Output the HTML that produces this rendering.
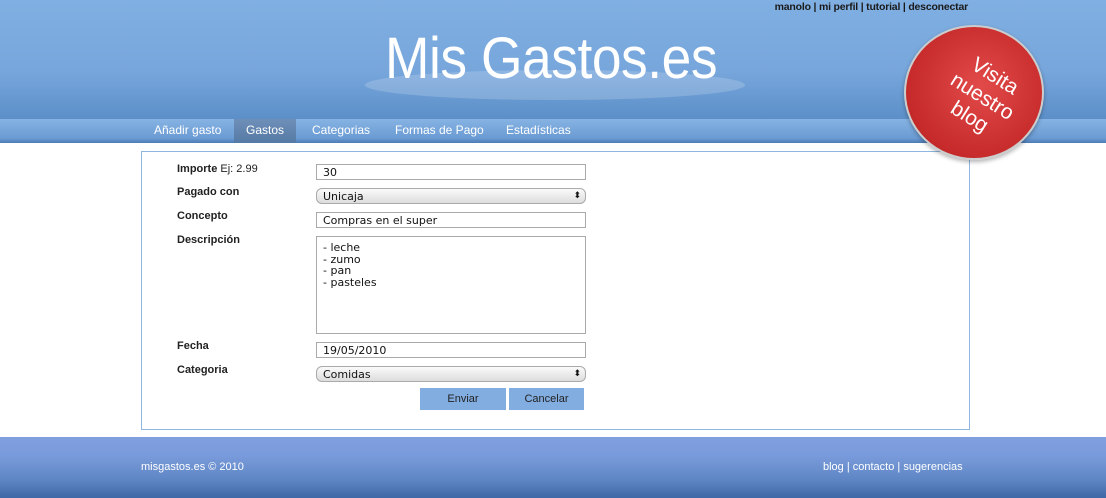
<!DOCTYPE html>
<html><head><meta charset="utf-8"><style>
*{margin:0;padding:0;box-sizing:border-box}
body{width:1106px;height:498px;overflow:hidden;background:#fff;font-family:"Liberation Sans",sans-serif;position:relative}
#hdr{position:absolute;left:0;top:0;width:1106px;height:119px;background:linear-gradient(#80afe2,#77a6dc 60%,#5c8fc8)}
#top{position:absolute;right:138px;top:1px;font-size:10.5px;font-weight:bold;color:#1a1a1a;letter-spacing:-0.2px}
#logo{position:absolute;left:385px;top:26px;font-size:58px;color:#fff;font-family:"Liberation Sans",sans-serif;letter-spacing:-0.5px;font-weight:normal;transform:scaleX(0.92);transform-origin:left;line-height:66px}
#ell{position:absolute;left:365px;top:70px;width:380px;height:30px;border-radius:50%;background:rgba(255,255,255,0.18)}
#nav{position:absolute;left:0;top:119px;width:1106px;height:24px;background:linear-gradient(#86b3e3,#6b9bd3 80%,#4d7cb5)}
#nav span{position:absolute;top:0;height:24px;line-height:22px;color:#fff;font-size:12px}
#nav .act{background:linear-gradient(#6e8fb8,#557aa5)}
#blog{position:absolute;left:904px;top:25px;width:140px;height:135px;border-radius:50%;background:radial-gradient(circle at 55% 45%,#e24a4a,#c62a2a 70%,#a11c1c);border:2px solid #ccc;box-shadow:0 2px 4px rgba(0,0,0,.3);z-index:2}
#blog div{position:absolute;color:#fff;font-size:21px;font-family:"Liberation Sans",sans-serif;transform:rotate(32deg);text-align:center;left:26px;top:34px;line-height:24px;width:100px}
#box{position:absolute;left:141px;top:151px;width:829px;height:279px;border:1px solid #8fb6e2}
.l{position:absolute;left:177px;font-size:11px;font-weight:bold;color:#222}
.i{position:absolute;left:316px;width:270px;height:16px;border:1px solid #aaa;font-size:11px;padding-left:6px;line-height:15px;color:#111;font-family:"DejaVu Sans",sans-serif}
.s{border-radius:6px;background:linear-gradient(#fafafa,#ddd);border-color:#aaa}
.s:after{content:"⬍";position:absolute;right:4px;top:0;font-size:9px}
.b{position:absolute;top:388px;height:22px;background:#82ade0;color:#222;font-size:11px;text-align:center;line-height:22px}
#ft{position:absolute;left:0;top:437px;width:1106px;height:61px;background:linear-gradient(#7f9fdf,#7a9bdb 30%,#5f86c4 70%,#3e67a6)}
#ft span{position:absolute;top:24px;color:#fff;font-size:11px}
</style></head><body>
<div id="hdr"><div id="top">manolo | mi perfil | tutorial | desconectar</div><div id="ell"></div><div id="logo">Mis Gastos.es</div></div>
<div id="nav">
<span style="left:154px">Añadir gasto</span>
<span class="act" style="left:234px;width:62px;text-align:center">Gastos</span>
<span style="left:312px">Categorias</span>
<span style="left:395px">Formas de Pago</span>
<span style="left:506px">Estadísticas</span>
</div>
<div id="box"></div>
<div id="blog"><div>Visita<br>nuestro<br>blog</div></div>
<div class="l" style="top:163px">Importe <span style="font-weight:normal">Ej: 2.99</span></div>
<div class="l" style="top:186px">Pagado con</div>
<div class="l" style="top:210px">Concepto</div>
<div class="l" style="top:234px">Descripción</div>
<div class="l" style="top:340px">Fecha</div>
<div class="l" style="top:364px">Categoria</div>
<div class="i" style="top:164px">30</div>
<div class="i s" style="top:188px">Unicaja</div>
<div class="i" style="top:212px">Compras en el super</div>
<div class="i" style="top:236px;height:98px;padding-top:5px;line-height:11.5px">- leche<br>- zumo<br>- pan<br>- pasteles</div>
<div class="i" style="top:342px">19/05/2010</div>
<div class="i s" style="top:366px">Comidas</div>
<div class="b" style="left:420px;width:86px">Enviar</div>
<div class="b" style="left:509px;width:75px">Cancelar</div>
<div id="ft"><span style="left:141px">misgastos.es © 2010</span><span style="left:823px">blog | contacto | sugerencias</span></div>
</body></html>
